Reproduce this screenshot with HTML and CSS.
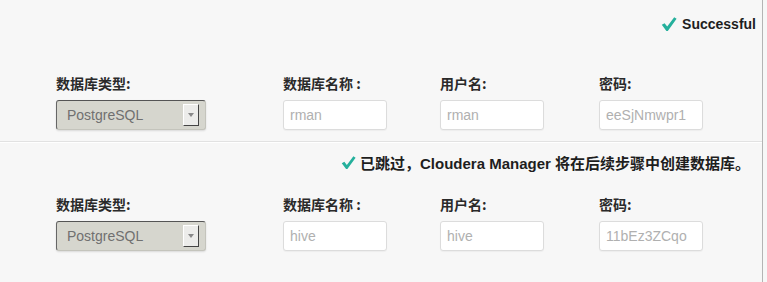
FILE: index.html
```html
<!DOCTYPE html>
<html lang="zh-CN">
<head>
  <meta charset="UTF-8" />
  <title>数据库设置</title>
  <link rel="stylesheet" href="styles.css">
</head>
<body>
  <div class="page">
    <div class="db-row">
      <div class="status status-top">
        <svg class="check" viewBox="0 0 16 16"><path d="M0.8 8.8 L3.6 7.2 L6.2 10.6 L13.2 1.2 L15.6 2.8 L6.8 15 L5.4 15 Z"/></svg>
        <span>Successful</span>
      </div>
      <div class="fields">
        <label>数据库类型:</label>
        <label>数据库名称 :</label>
        <label>用户名:</label>
        <label>密码:</label>

        <div class="select"><span>PostgreSQL</span><span class="select-arrow"></span></div>
        <input type="text" placeholder="rman" />
        <input type="text" placeholder="rman" />
        <input type="text" placeholder="eeSjNmwpr1" />
      </div>
    </div>

    <div class="db-row">
      <div class="status status-note">
        <svg class="check check-sm" viewBox="0 0 16 16"><path d="M0.8 8.8 L3.6 7.2 L6.2 10.6 L13.2 1.2 L15.6 2.8 L6.8 15 L5.4 15 Z"/></svg>
        <span>已跳过，Cloudera Manager 将在后续步骤中创建数据库。</span>
      </div>
      <div class="fields">
        <label>数据库类型:</label>
        <label>数据库名称 :</label>
        <label>用户名:</label>
        <label>密码:</label>

        <div class="select"><span>PostgreSQL</span><span class="select-arrow"></span></div>
        <input type="text" placeholder="hive" />
        <input type="text" placeholder="hive" />
        <input type="text" placeholder="11bEz3ZCqo" />
      </div>
    </div>
  </div>
</body>
</html>
```

FILE: styles.css
```css
body {
  margin: 0;
  background: #f7f7f7;
  font-family: "Liberation Sans", "Noto Sans CJK SC", sans-serif;
  color: #222;
}

.page {
  width: 763px;
  height: 282px;
  border-right: 1px solid #b4b4b4;
  box-sizing: border-box;
}

.db-row {
  padding: 10px 0 11px;
  border-bottom: 1px solid #e2e2e2;
  box-shadow: 0 1px 0 #fff;
}

.db-row:last-child {
  border-bottom: none;
  box-shadow: none;
}

.status {
  display: flex;
  justify-content: flex-end;
  align-items: center;
  gap: 4px;
  height: 20px;
  padding-right: 12px;
  font-size: 14px;
  font-weight: bold;
  color: #1e1e1e;
  margin-bottom: 22px;
}

.status-top {
  height: 24px;
  gap: 5px;
  padding-right: 6px;
  margin-top: 2px;
  margin-bottom: 37px;
}

.status-note {
  font-size: 15px;
}

.check {
  width: 16px;
  height: 16px;
  fill: #25b09c;
}

.check-sm {
  width: 15px;
  height: 15px;
}

.fields {
  display: grid;
  grid-template-columns: 227px 157px 159px 110px;
  row-gap: 7px;
  padding-left: 56px;
}

.fields label {
  font-family: "Noto Sans CJK SC", sans-serif;
  font-weight: bold;
  font-size: 14px;
  line-height: 20px;
  color: #2a2a2a;
}

.fields input {
  width: 104px;
  height: 30px;
  box-sizing: border-box;
  padding: 0 6px;
  border: 1px solid #dcdcdc;
  border-radius: 3px;
  background: #fff;
  box-shadow: 0 1px 1px rgba(0, 0, 0, 0.04);
  font-family: "Liberation Sans", sans-serif;
  font-size: 14px;
  color: #aaa;
}

.fields input::placeholder {
  color: #b0b0b0;
}

.select {
  width: 150px;
  height: 30px;
  box-sizing: border-box;
  display: flex;
  align-items: center;
  justify-content: space-between;
  padding: 0 6px 0 10px;
  background: #d6d6ce;
  border: 1px solid #c4c4bc;
  border-top-color: #555;
  border-left-color: #666;
  border-radius: 3px;
  box-shadow: 0 1px 2px rgba(0, 0, 0, 0.12);
  font-family: "Liberation Sans", sans-serif;
  font-size: 14px;
  color: #707070;
}

.select-arrow {
  position: relative;
  width: 14px;
  height: 20px;
  background: #ececea;
  border-top: 1px solid #fff;
  border-left: 1px solid #fff;
  border-right: 1px solid #444;
  border-bottom: 1px solid #444;
}

.select-arrow::after {
  content: "";
  position: absolute;
  left: 4px;
  top: 8px;
  border-left: 3px solid transparent;
  border-right: 3px solid transparent;
  border-top: 4px solid #888;
}
```
